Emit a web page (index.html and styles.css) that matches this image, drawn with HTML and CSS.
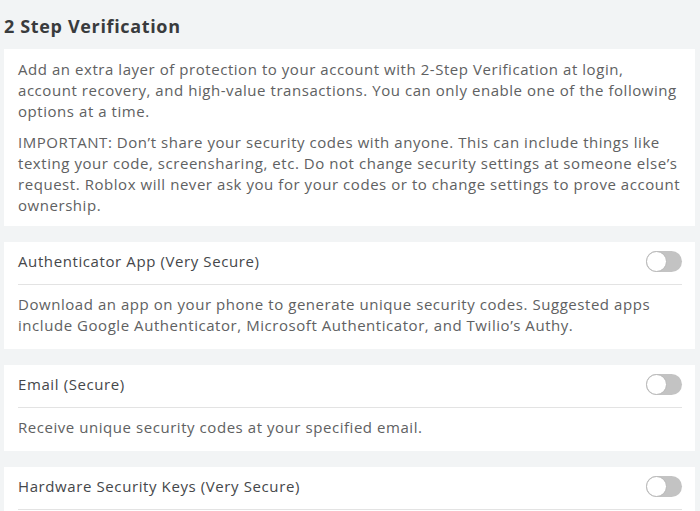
FILE: index.html
```html
<!DOCTYPE html>
<html>
<head>
<meta charset="utf-8">
<link rel="stylesheet" href="styles.css">
</head>
<body>
<div class="page">
  <h2 class="title">2 Step Verification</h2>
  <section class="card intro">
    <p>Add an extra layer of protection to your account with 2-Step Verification at login, account recovery, and high-value transactions. You can only enable one of the following options at a time.</p>
    <p>IMPORTANT: Don’t share your security codes with anyone. This can include things like texting your code, screensharing, etc. Do not change security settings at someone else’s request. Roblox will never ask you for your codes or to change settings to prove account ownership.</p>
  </section>
  <section class="card option">
    <div class="option-head">
      <span class="option-name">Authenticator App (Very Secure)</span>
      <span class="toggle"><span class="knob"></span></span>
    </div>
    <div class="option-body">Download an app on your phone to generate unique security codes. Suggested apps include Google Authenticator, Microsoft Authenticator, and Twilio’s Authy.</div>
  </section>
  <section class="card option">
    <div class="option-head">
      <span class="option-name">Email (Secure)</span>
      <span class="toggle"><span class="knob"></span></span>
    </div>
    <div class="option-body">Receive unique security codes at your specified email.</div>
  </section>
  <section class="card option">
    <div class="option-head">
      <span class="option-name">Hardware Security Keys (Very Secure)</span>
      <span class="toggle"><span class="knob"></span></span>
    </div>
    <div class="option-body option-body-empty"></div>
  </section>
</div>
</body>
</html>
```

FILE: styles.css
```css
html, body {
  margin: 0;
  padding: 0;
  background: #f2f4f5;
}
body {
  font-family: "Open Sans", "Liberation Sans", sans-serif;
  color: #606162;
  overflow: hidden;
  height: 511px;
}
.page {
  padding: 14px 5px 0 4px;
  display: flex;
  flex-direction: column;
  gap: 16px;
}
.title {
  margin: 0 0 -5px 0;
  font-size: 18px;
  line-height: 24px;
  font-weight: 700;
  color: #393b3d;
  letter-spacing: 0.65px;
}
.card {
  background: #ffffff;
}
.intro {
  padding: 10px 11px 10px 14px;
  display: flex;
  flex-direction: column;
  gap: 10px;
}
.intro p {
  margin: 0;
  font-size: 15px;
  line-height: 21px;
  letter-spacing: 0.55px;
}
.option {
  padding: 0 13px 0 14px;
}
.option-head {
  padding: 9px 0 12px;
  display: flex;
  align-items: center;
  justify-content: space-between;
  border-bottom: 1px solid #e3e3e3;
}
.option-name {
  font-size: 15px;
  line-height: 21px;
  color: #45474a;
  letter-spacing: 0.6px;
}
.option-body {
  padding: 9px 0 13px;
  font-size: 15px;
  line-height: 21px;
  letter-spacing: 0.55px;
}
.option-body-empty {
  height: 21px;
}
.toggle {
  width: 36px;
  height: 21px;
  border-radius: 11px;
  background: #c3c3c3;
  display: flex;
  align-items: center;
}
.knob {
  width: 19px;
  height: 19px;
  border-radius: 50%;
  background: #ffffff;
  border: 1px solid #b8b8b8;
}
```
